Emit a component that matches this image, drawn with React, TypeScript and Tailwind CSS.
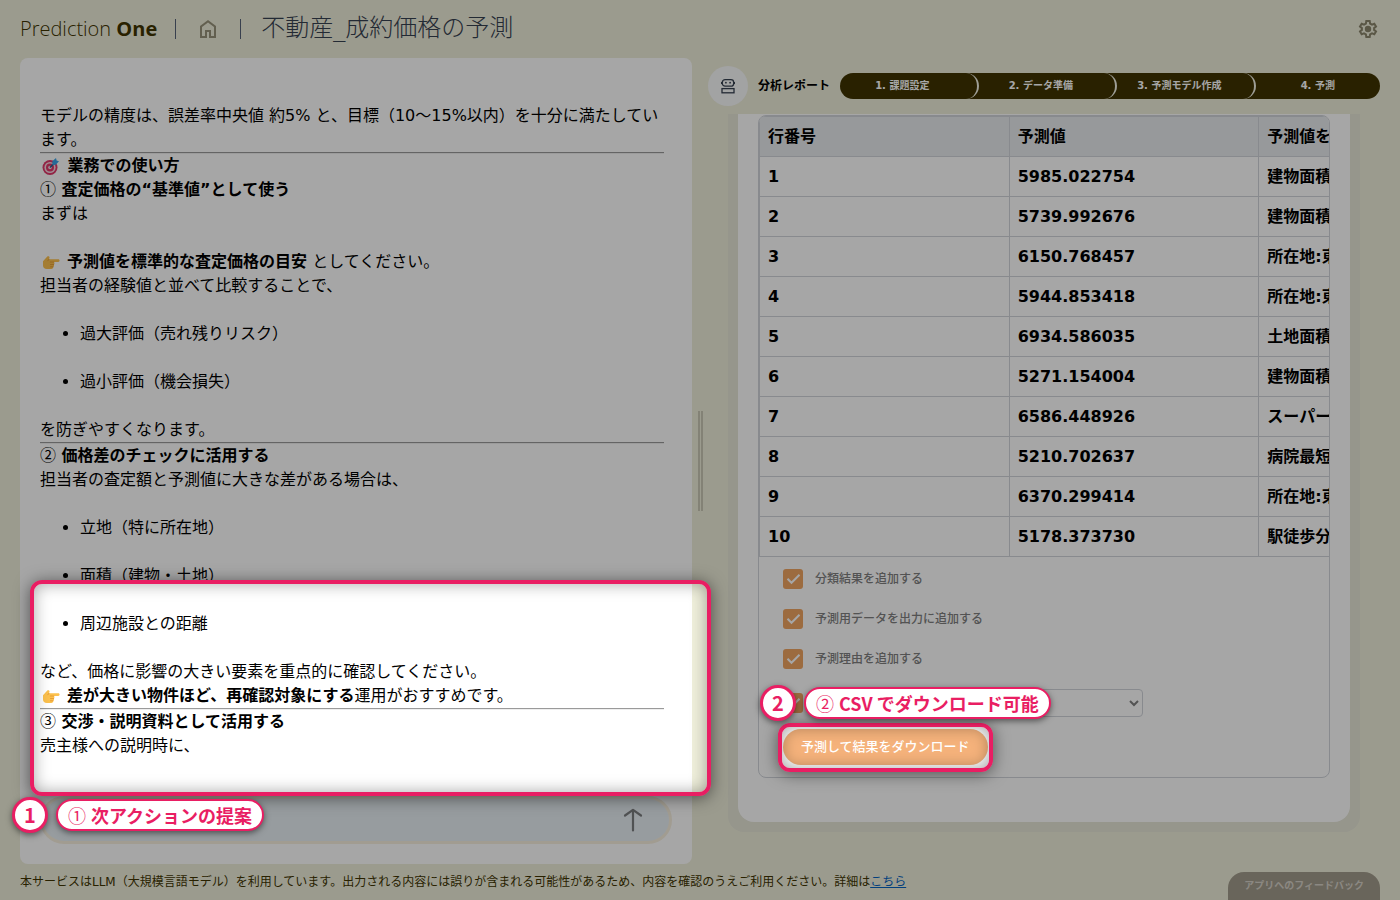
import type { ReactNode } from "react";

const steps = ["1. 課題設定", "2. データ準備", "3. 予測モデル作成", "4. 予測"];

const rows = [
  { id: 1, value: "5985.022754", reason: "建物面積" },
  { id: 2, value: "5739.992676", reason: "建物面積" },
  { id: 3, value: "6150.768457", reason: "所在地:東" },
  { id: 4, value: "5944.853418", reason: "所在地:東" },
  { id: 5, value: "6934.586035", reason: "土地面積" },
  { id: 6, value: "5271.154004", reason: "建物面積" },
  { id: 7, value: "6586.448926", reason: "スーパー" },
  { id: 8, value: "5210.702637", reason: "病院最短" },
  { id: 9, value: "6370.299414", reason: "所在地:東" },
  { id: 10, value: "5178.373730", reason: "駅徒歩分" },
];

const options = [
  "分類結果を追加する",
  "予測用データを出力に追加する",
  "予測理由を追加する",
];

const HomeIcon = () => (
  <svg viewBox="0 0 24 24" className="h-6 w-6" fill="currentColor">
    <path d="M6 19h3v-6h6v6h3v-9l-6-4.5L6 10v9Zm-2 2V9l8-6 8 6v12h-7v-6h-2v6H4Z" />
  </svg>
);

const GearIcon = () => (
  <svg viewBox="0 0 24 24" className="h-6 w-6">
    <path
      d="M10.3 4h3.400l.4 2.500 1.900 1.100 2.300-.9 1.700 2.900-1.900 1.500v1.800l1.900 1.500-1.700 2.900-2.300-.9-1.900 1.100-.4 2.500h-3.400l-.4-2.500-1.900-1.100-2.300.9L4 14.400l1.900-1.500v-1.800L4 9.600l1.700-2.900 2.300.9 1.900-1.100z"
      fill="none"
      stroke="currentColor"
      strokeWidth="2"
    />
    <circle cx="12" cy="12" r="3.2" fill="currentColor" />
  </svg>
);

const RobotIcon = () => (
  <svg
    viewBox="0 0 16 16"
    className="h-4 w-4"
    fill="none"
    stroke="currentColor"
    strokeWidth="1.3"
  >
    <rect x="2.3" y="1.6" width="11.4" height="6.6" rx="2.8" />
    <path d="M1.500 4v2M14.500 4v2" strokeWidth="1" />
    <circle cx="5.9" cy="4.7" r=".9" fill="currentColor" stroke="none" />
    <circle cx="10.1" cy="4.7" r=".9" fill="currentColor" stroke="none" />
    <rect x="2" y="10.6" width="12" height="4.2" />
  </svg>
);

const TargetIcon = () => (
  <svg viewBox="0 0 20 20" className="mr-[2px] inline-block h-5 w-5 align-[-5px]">
    <circle cx="10" cy="11.500" r="7.500" fill="#e0386a" />
    <circle cx="10" cy="11.500" r="5.600" fill="#f7d9e2" />
    <circle cx="10" cy="11.500" r="4" fill="#e0386a" />
    <circle cx="10" cy="11.500" r="1.800" fill="#f7d9e2" />
    <path d="m10 11.500 5-5" stroke="#28608f" strokeWidth="1.6" />
    <path d="m12.500 9-.2-3.800L16 2l.600 2.500 2.400.7-3.200 3.500z" fill="#38a3e8" />
  </svg>
);

const PointIcon = () => (
  <svg viewBox="0 0 20 20" className="mr-[2px] inline-block h-5 w-5 align-[-5px]">
    <path
      d="M3 9.200C4.600 7.500 6 6.300 7.300 4.600c.8-1 2.600-.3 2.200 1.100L9 7.300h9.300c1.700 0 1.700 2.700 0 2.700h-4.500c1 .8.9 2-.1 2.500.7.8.4 2-.6 2.300.4 1.200-.4 2.200-1.900 2.200H6.800C4.500 17 3 15.800 3 13.500z"
      fill="#fcc14d"
    />
    <path
      d="M13.800 10h-3.500M13.700 12.500h-3.200M13.100 14.800h-2.600M9 7.300l-1.200 1.500"
      stroke="#e59a34"
      strokeWidth=".9"
      strokeLinecap="round"
      fill="none"
    />
  </svg>
);

const ArrowUpIcon = () => (
  <svg
    viewBox="0 0 24 24"
    className="h-6 w-6"
    fill="none"
    stroke="currentColor"
    strokeWidth="2.2"
    strokeLinecap="round"
    strokeLinejoin="round"
  >
    <path d="M12 22.500V2M4 7.500 12 1.800l8 5.700" />
  </svg>
);

const Circled = ({ children }: { children: ReactNode }) => (
  <span className="font-['Noto_Sans_CJK_JP',sans-serif] leading-none font-normal">
    {children}
  </span>
);

const Rule = () => (
  <hr className="h-[2px] border-t border-b border-t-[#9a9a9a] border-b-[#eeeeee]" />
);

const Bullets = ({ items }: { items: string[] }) => (
  <ul className="my-6 flex list-disc flex-col gap-6 pl-10">
    {items.map((item) => (
      <li key={item}>{item}</li>
    ))}
  </ul>
);

const Check = ({ label }: { label?: string }) => (
  <label className="flex h-5 items-center gap-3 text-xs font-medium text-[#808080]">
    <span className="relative flex h-5 w-5">
      <input
        type="checkbox"
        defaultChecked
        aria-label={label ?? "出力形式を指定する"}
        className="h-5 w-5 appearance-none rounded-[3px] bg-[#f0a562]"
      />
      <svg
        viewBox="0 0 20 20"
        className="pointer-events-none absolute inset-0"
        fill="none"
        stroke="#fff"
        strokeWidth="2"
      >
        <path d="m4.500 9.800 4 4 8-8" />
      </svg>
    </span>
    {label}
  </label>
);

const Header = () => (
  <header className="flex h-[58px] items-center px-5 text-[#403400]">
    <div className="font-['Open_Sans',sans-serif] text-xl font-light">
      Prediction <b className="font-bold">One</b>
    </div>
    <span className="ml-[18px] h-5 w-px bg-[#566378]" />
    <a href="#home" aria-label="ホーム" className="mx-5 text-[#97927a]">
      <HomeIcon />
    </a>
    <span className="h-5 w-px bg-[#566378]" />
    <h1 className="ml-5 pb-[2px] text-2xl font-light text-[#374151]">
      不動産_成約価格の予測
    </h1>
    <button aria-label="設定" className="ml-auto text-[#8b866c]">
      <GearIcon />
    </button>
  </header>
);

const ChatPanel = () => (
  <section className="flex min-w-0 flex-col rounded-lg bg-white p-5">
    <div className="mb-[38px] flex-1 pt-[26px] pr-2 leading-6 text-black">
      <p>
        モデルの精度は、誤差率中央値 約5% と、目標（10～15%以内）を十分に満たしています。
      </p>
      <Rule />
      <p className="font-bold">
        <TargetIcon /> 業務での使い方
      </p>
      <p className="font-bold">
        <Circled>①</Circled> 査定価格の“基準値”として使う
      </p>
      <p>まずは</p>
      <p className="mt-6">
        <PointIcon /> <b>予測値を標準的な査定価格の目安</b> としてください。
      </p>
      <p>担当者の経験値と並べて比較することで、</p>
      <Bullets items={["過大評価（売れ残りリスク）", "過小評価（機会損失）"]} />
      <p>を防ぎやすくなります。</p>
      <Rule />
      <p className="font-bold">
        <Circled>②</Circled> 価格差のチェックに活用する
      </p>
      <p>担当者の査定額と予測値に大きな差がある場合は、</p>
      <Bullets
        items={["立地（特に所在地）", "面積（建物・土地）", "周辺施設との距離"]}
      />
      <p>など、価格に影響の大きい要素を重点的に確認してください。</p>
      <p>
        <PointIcon /> <b>差が大きい物件ほど、再確認対象にする</b>運用がおすすめです。
      </p>
      <Rule />
      <p className="font-bold">
        <Circled>③</Circled> 交渉・説明資料として活用する
      </p>
      <p>売主様への説明時に、</p>
    </div>
    <form className="flex h-12 items-center rounded-full border-3 border-[#f8f0df] bg-[#e9f0f5] pr-6 pl-5">
      <input aria-label="メッセージ" className="min-w-0 flex-1 outline-none" />
      <button type="button" aria-label="送信" className="text-[#7c7e80]">
        <ArrowUpIcon />
      </button>
    </form>
  </section>
);

const cell = "h-10 border border-[#d1d5db] px-2 whitespace-nowrap";

const ReportPanel = () => (
  <section className="min-w-0">
    <div className="flex h-14 items-center">
      <div className="flex h-10 w-10 items-center justify-center rounded-full bg-[#f9fafb] text-[#374151]">
        <RobotIcon />
      </div>
      <h2 className="mx-[10px] text-xs font-bold text-black">分析レポート</h2>
      <ol className="flex h-[26px] flex-1 overflow-hidden rounded-full bg-[#403400] text-center text-[10px] leading-[26px] font-bold text-white">
        {steps.map((step) => (
          <li
            key={step}
            className="flex-1 rounded-r-full border-r-2 border-[#f3f3e6] pr-3 whitespace-nowrap last:border-r-0 last:pr-0"
          >
            {step}
          </li>
        ))}
      </ol>
    </div>
    <div className="mx-5 rounded-b-2xl bg-[#e6e6d8] px-[10px] pb-[10px]">
      <div className="rounded-b-2xl bg-white px-5 pt-px pb-11">
        <div className="overflow-hidden rounded-lg border border-[#d1d5db]">
          <table className="w-[750px] table-fixed border-collapse text-left font-bold text-black">
            <thead className="bg-[#e9ebee]">
              <tr>
                <th className={cell}>行番号</th>
                <th className={cell}>予測値</th>
                <th className={cell}>予測値を</th>
              </tr>
            </thead>
            <tbody>
              {rows.map((row) => (
                <tr key={row.id}>
                  <td className={cell}>{row.id}</td>
                  <td className={cell}>{row.value}</td>
                  <td className={cell}>{row.reason}</td>
                </tr>
              ))}
            </tbody>
          </table>
          <div className="flex flex-col items-start px-6 pt-3 pb-3">
            <div className="flex flex-col gap-5">
              {options.map((label) => (
                <Check key={label} label={label} />
              ))}
            </div>
            <div className="mt-5 flex items-center gap-3">
              <Check />
              <div className="relative">
                <select
                  aria-label="出力形式"
                  className="h-7 w-[328px] appearance-none rounded-sm border border-[#d1d5db] bg-white"
                >
                  <option></option>
                </select>
                <svg
                  viewBox="0 0 12 12"
                  className="pointer-events-none absolute top-2 right-[3px] h-3 w-3"
                  fill="none"
                  stroke="#808080"
                  strokeWidth="2"
                >
                  <path d="m2 4 4 4 4-4" />
                </svg>
              </div>
            </div>
            <button className="mt-3 h-9 rounded-full bg-[#f5b27b] px-[18px] text-[13px] font-medium text-white">
              予測して結果をダウンロード
            </button>
          </div>
        </div>
      </div>
    </div>
  </section>
);

const Footer = () => (
  <footer className="flex h-9 items-end justify-between px-5 text-xs text-[#403400]">
    <p className="self-center">
      本サービスはLLM（大規模言語モデル）を利用しています。出力される内容には誤りが含まれる可能性があるため、内容を確認のうえご利用ください。詳細は
      <a href="#detail" className="text-[#0563c1] underline">
        こちら
      </a>
    </p>
    <button className="h-7 rounded-t-2xl bg-[#a29c8c] px-4 text-[10px] font-bold text-[#d6d1c8]">
      アプリへのフィードバック
    </button>
  </footer>
);

// Dims the page except for the two highlighted areas
const Dimmer = () => (
  <svg className="pointer-events-none absolute inset-0 h-full w-full">
    <mask id="spots">
      <rect width="100%" height="100%" fill="#fff" />
      <rect x="32" y="582" width="677" height="212" rx="8" fill="#000" />
      <rect x="780" y="725" width="211" height="45" rx="8" fill="#000" />
    </mask>
    <rect width="100%" height="100%" fillOpacity="0.35" mask="url(#spots)" />
  </svg>
);

const frame =
  "pointer-events-none absolute rounded-xl border-4 border-[#e91e63] shadow-[0_2px_16px_rgba(0,0,0,0.5),inset_0_0_16px_rgba(0,0,0,0.35)]";

const Note = ({
  no,
  mark,
  children,
}: {
  no: number;
  mark: string;
  children: ReactNode;
}) => (
  <div className="flex items-center gap-2 font-['Noto_Sans_CJK_JP',sans-serif] text-lg font-bold text-[#e91e63]">
    <span className="flex h-9 w-9 items-center justify-center rounded-full border-3 border-[#e91e63] bg-white text-xl shadow-[0_2px_6px_rgba(0,0,0,0.5)]">
      {no}
    </span>
    <span className="flex h-8 items-center gap-[5px] rounded-full border-2 border-[#e91e63] bg-white px-[10px] whitespace-nowrap shadow-[0_2px_6px_rgba(0,0,0,0.5)]">
      <Circled>{mark}</Circled>
      {children}
    </span>
  </div>
);

export default function App() {
  return (
    <div className="relative flex min-h-screen flex-col overflow-hidden bg-[#efefdb] font-['DejaVu_Sans','Noto_Sans_CJK_JP',sans-serif] text-base">
      <Header />
      <main className="grid flex-1 grid-cols-[minmax(0,1fr)_16px_minmax(0,1fr)] px-5">
        <ChatPanel />
        <div className="flex items-center justify-center gap-px">
          <span className="h-[100px] w-[2px] bg-[#c9c8b5]" />
          <span className="h-[100px] w-[2px] bg-[#c9c8b5]" />
        </div>
        <ReportPanel />
      </main>
      <Footer />

      <Dimmer />
      <div className={`${frame} top-[580px] left-[30px] h-[216px] w-[681px]`} />
      <div className={`${frame} top-[723px] left-[778px] h-[49px] w-[215px]`} />
      <div className="absolute top-[797px] left-3">
        <Note no={1} mark="①">
          次アクションの提案
        </Note>
      </div>
      <div className="absolute top-[685px] left-[760px]">
        <Note no={2} mark="②">
          CSV でダウンロード可能
        </Note>
      </div>
    </div>
  );
}
